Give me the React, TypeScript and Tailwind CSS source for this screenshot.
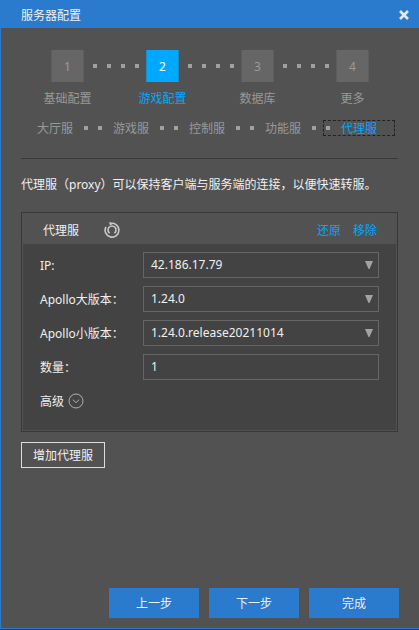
import { useState } from "react";

const steps = ["基础配置", "游戏配置", "数据库", "更多"];
const tabs = ["大厅服", "游戏服", "控制服", "功能服", "代理服"];

function Dots({ count }: { count: number }) {
  return (
    <span className="flex gap-[10px]" aria-hidden="true">
      {Array.from({ length: count }, (_, i) => (
        <span key={i} className="size-1 bg-[#a0a0a0]" />
      ))}
    </span>
  );
}

function StepBar({ active }: { active: number }) {
  return (
    <ol className="flex justify-center">
      {steps.map((label, i) => (
        <li key={label} className="flex">
          <button
            type="button"
            className={`flex w-[33px] flex-col items-center gap-[9px] ${i === active ? "text-[#00a8ff]" : "text-[#999999]"}`}
          >
            <span
              className={`flex h-8 w-full items-center justify-center border-x pt-0.5 ${
                i === active
                  ? "border-[#1f8cc4] bg-[#00a8ff] text-white"
                  : "border-[#5d5d5d] bg-[#666666]"
              }`}
            >
              {i + 1}
            </span>
            <span className="whitespace-nowrap">{label}</span>
          </button>
          {i < steps.length - 1 && (
            <span className="flex h-8 items-center pr-[7px] pl-[9px]">
              <Dots count={4} />
            </span>
          )}
        </li>
      ))}
    </ol>
  );
}

function TabBar({ active }: { active: number }) {
  return (
    <nav className="flex h-4 items-center justify-center gap-[11px] pr-[6px]">
      {tabs.map((label, i) => (
        <div key={label} className="flex items-center gap-[11px]">
          {i > 0 && <Dots count={2} />}
          <button
            type="button"
            className={`relative pt-0.5 whitespace-nowrap ${i === active ? "text-[#00a8ff]" : "text-[#999999]"}`}
          >
            {label}
            {i === active && (
              <span className="absolute -inset-x-[18px] inset-y-px border border-dashed border-[#222222]" />
            )}
          </button>
        </div>
      ))}
    </nav>
  );
}

function SelectRow({ id, label, value }: { id: string; label: string; value: string }) {
  return (
    <div className="flex items-center">
      <label htmlFor={id} className="w-[103px] shrink-0 pt-0.5">
        {label}
      </label>
      <div className="relative min-w-0 flex-1">
        <select
          id={id}
          defaultValue={value}
          className="block h-[26px] w-full appearance-none border border-[#666666] bg-[#434343] px-[7px] outline-none"
        >
          <option>{value}</option>
        </select>
        <svg
          viewBox="0 0 8 8"
          className="pointer-events-none absolute top-[9px] right-[6px] size-2 fill-[#a3a3a3]"
          aria-hidden="true"
        >
          <path d="M0 0H8L4.5 8H3.5Z" />
        </svg>
      </div>
    </div>
  );
}

export default function App() {
  const [count, setCount] = useState("1");

  return (
    <main className="flex min-h-screen flex-col bg-[#3a3a3a] pb-px font-['Noto_Sans','Noto_Sans_CJK_SC',sans-serif] text-xs leading-4 text-[#f0f0f0]">
      <header className="flex h-7 items-center justify-between bg-[#2a7acd] pt-0.5 pr-[10px] pl-[21px]">
        <h1 className="pt-0.5">服务器配置</h1>
        <button type="button" aria-label="关闭">
          <svg viewBox="0 0 10 10" className="size-[10px] stroke-[#e8e8e8]" strokeWidth="2.6" aria-hidden="true">
            <path d="M1 1L9 9M9 1L1 9" />
          </svg>
        </button>
      </header>

      <div className="flex flex-1 flex-col border-b border-l border-[#2a7acd] bg-[#525252] px-5 pt-[22px] pb-[10px]">
        <StepBar active={1} />
        <div className="mt-[13px] mb-[22px]">
          <TabBar active={4} />
        </div>
        <hr className="mr-px border-[#383838]" />
        <p className="mt-[18px]">代理服（proxy）可以保持客户端与服务端的连接，以便快速转服。</p>

        <section className="mt-[19px] mr-px border border-[#383838] p-px">
          <header className="flex h-[30px] items-center pt-0.5 pr-[19px] pl-5">
            <h2 className="pt-px">代理服</h2>
            <button type="button" aria-label="刷新" className="ml-[25px]">
              <svg
                viewBox="0 0 16 16"
                className="size-4 fill-none stroke-[#c8c8c8]"
                strokeWidth="1.6"
                aria-hidden="true"
              >
                <path d="M6 1.6A6.9 6.9 0 1 1 2 4.8" />
                <path d="M5 0L9.4 1.4L6 3.6Z" className="fill-[#c8c8c8] stroke-none" />
                <path d="M5.6 11.2A4 4 0 1 1 10.4 11.2" />
              </svg>
            </button>
            <div className="ml-auto flex gap-3 pt-px text-[#00a8ff]">
              <button type="button">还原</button>
              <button type="button">移除</button>
            </div>
          </header>
          <div className="flex flex-col gap-2 bg-[#434343] pt-2 pr-[17px] pb-4 pl-[17px]">
            <SelectRow id="ip" label="IP:" value="42.186.17.79" />
            <SelectRow id="major" label="Apollo大版本：" value="1.24.0" />
            <SelectRow id="minor" label="Apollo小版本：" value="1.24.0.release20211014" />
            <div className="flex items-center">
              <label htmlFor="count" className="w-[103px] shrink-0 pt-0.5">
                数量：
              </label>
              <input
                id="count"
                value={count}
                onChange={(e) => setCount(e.target.value)}
                className="h-[26px] min-w-0 flex-1 border border-[#666666] bg-transparent px-[7px] pb-0.5 outline-none"
              />
            </div>
            <button type="button" className="flex h-[26px] items-center gap-1 self-start">
              <span className="pt-0.5">高级</span>
              <svg
                viewBox="0 0 16 16"
                className="size-4 fill-none stroke-[#b0b0b0]"
                aria-hidden="true"
              >
                <circle cx="8" cy="8" r="7" />
                <path d="M4.8 6.6L8 9.6L11.2 6.6" />
              </svg>
            </button>
          </div>
        </section>

        <button type="button" className="mt-[10px] h-[26px] self-start border border-[#dddddd] px-[11px] pt-0.5">
          增加代理服
        </button>

        <footer className="mt-auto flex justify-end gap-[10px]">
          {["上一步", "下一步", "完成"].map((label) => (
            <button key={label} type="button" className="h-[30px] w-[90px] bg-[#2a7acd] pt-0.5">
              {label}
            </button>
          ))}
        </footer>
      </div>
    </main>
  );
}
